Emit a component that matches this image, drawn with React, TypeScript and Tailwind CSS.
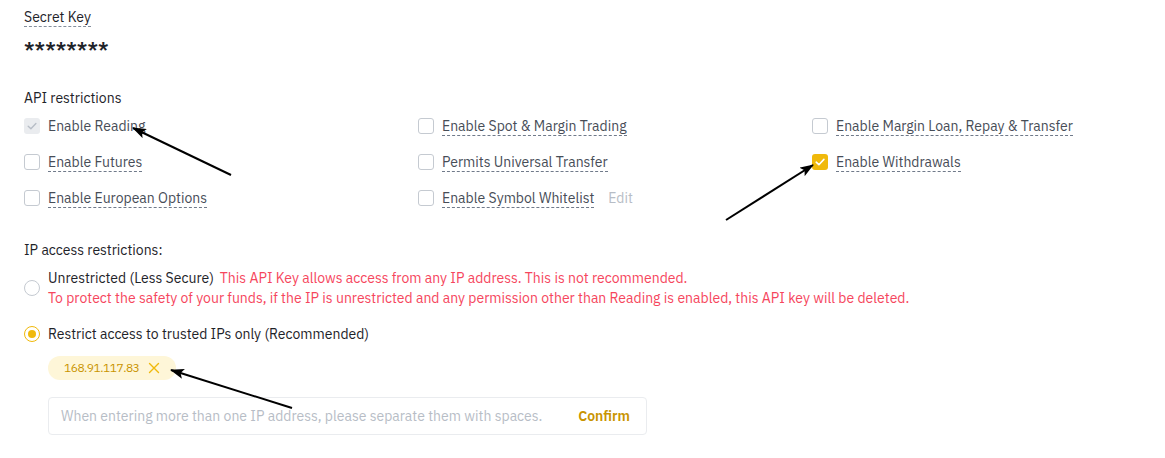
import React from "react";

const font = { fontFamily: '"IBM Plex Sans", "Noto Sans", "Liberation Sans", sans-serif' };

function Box({ state }: { state: "off" | "on" | "disabled" }) {
  if (state === "on")
    return (
      <span className="flex h-[16px] w-[16px] shrink-0 items-center justify-center rounded-[3px] bg-[#F0B90B]">
        <svg width="12" height="12" viewBox="0 0 12 12">
          <path d="M2.2 6.2 L4.9 8.7 L9.9 3.4" fill="none" stroke="#fff" strokeWidth="1.6" strokeLinecap="round" strokeLinejoin="round" />
        </svg>
      </span>
    );
  if (state === "disabled")
    return (
      <span className="flex h-[16px] w-[16px] shrink-0 items-center justify-center rounded-[3px] bg-[#EAECEF]">
        <svg width="12" height="12" viewBox="0 0 12 12">
          <path d="M2.2 6.2 L4.9 8.7 L9.9 3.4" fill="none" stroke="#B7BDC6" strokeWidth="1.4" strokeLinecap="round" strokeLinejoin="round" />
        </svg>
      </span>
    );
  return <span className="h-[16px] w-[16px] shrink-0 rounded-[3px] border border-[#C5CAD1] bg-white" />;
}

function Item({ label, state = "off", dashed = true, extra }: { label: string; state?: "off" | "on" | "disabled"; dashed?: boolean; extra?: React.ReactNode }) {
  return (
    <div className="flex h-[36px] items-center">
      <Box state={state} />
      <span
        className={
          "ml-[8px] text-[14px] leading-[18px] text-[#474D57] " +
          (dashed ? "border-b border-dashed border-[#707A8A]" : "border-b border-transparent")
        }
      >
        {label}
      </span>
      {extra}
    </div>
  );
}

export default function App() {
  return (
    <div className="relative h-[458px] w-[1165px] overflow-hidden bg-white text-[#1E2329]" style={font}>
      <div className="flex flex-col items-start pl-[24px] pt-[8px]">
        <span className="border-b border-dashed border-[#848E9C] text-[14px] leading-[18px] text-[#1E2329]">Secret Key</span>
        <div className="mt-[12px] text-[19px] font-semibold leading-[20px]">********</div>
        <div className="mt-[29px] text-[14px] leading-[20px]">API restrictions</div>
        <div className="grid grid-cols-[394px_394px_394px]">
          <Item label="Enable Reading" state="disabled" dashed={false} />
          <Item label="Enable Spot & Margin Trading" />
          <Item label="Enable Margin Loan, Repay & Transfer" />
          <Item label="Enable Futures" />
          <Item label="Permits Universal Transfer" />
          <Item label="Enable Withdrawals" state="on" />
          <Item label="Enable European Options" />
          <Item
            label="Enable Symbol Whitelist"
            extra={<span className="ml-[14px] text-[14px] leading-[18px] text-[#B7BDC6]">Edit</span>}
          />
        </div>
        <div className="mt-[24px] text-[14px] leading-[20px]">IP access restrictions:</div>
        <div className="mt-[8px] flex items-center">
          <span className="h-[16px] w-[16px] shrink-0 rounded-full border border-[#C5CAD1]" />
          <div className="ml-[8px] text-[14px] leading-[20px]">
            <div>
              <span className="text-[#1E2329]">Unrestricted (Less Secure)</span>
              <span className="ml-[6px] text-[#F6465D]">This API Key allows access from any IP address. This is not recommended.</span>
            </div>
            <div className="text-[#F6465D]">
              To protect the safety of your funds, if the IP is unrestricted and any permission other than Reading is enabled, this API key will be deleted.
            </div>
          </div>
        </div>
        <div className="mt-[16px] flex items-center">
          <span className="flex h-[16px] w-[16px] shrink-0 items-center justify-center rounded-full border border-[#F0B90B]">
            <span className="h-[8px] w-[8px] rounded-full bg-[#F0B90B]" />
          </span>
          <span className="ml-[8px] text-[14px] leading-[20px]">Restrict access to trusted IPs only (Recommended)</span>
        </div>
        <div className="ml-[24px] mt-[12px] flex h-[24px] items-center rounded-full bg-[#FEF6D8] pl-[16px] pr-[16px]">
          <span className="text-[12px] leading-[16px] tracking-[-0.5px] text-[#C99400]">168.91.117.83</span>
          <svg className="ml-[9px]" width="12" height="12" viewBox="0 0 12 12">
            <path d="M1.5 1.5 L10.5 10.5 M10.5 1.5 L1.5 10.5" stroke="#F0B90B" strokeWidth="1.4" strokeLinecap="round" />
          </svg>
        </div>
        <div className="ml-[24px] mt-[17px] flex h-[38px] w-[599px] items-center rounded-[4px] border border-[#EAECEF] pl-[12px] pr-[16px]">
          <span className="flex-1 text-[14px] text-[#B7BDC6]">When entering more than one IP address, please separate them with spaces.</span>
          <span className="text-[14px] font-semibold text-[#C99400]">Confirm</span>
        </div>
      </div>

      <svg className="pointer-events-none absolute left-0 top-0" width="1165" height="458">
        <defs>
          <marker id="ah" markerWidth="14" markerHeight="10" refX="13" refY="5" orient="auto" markerUnits="userSpaceOnUse">
            <path d="M0 0 L14 5 L0 10 L3 5 Z" fill="#000" />
          </marker>
        </defs>
        <line x1="231" y1="175" x2="133" y2="128" stroke="#000" strokeWidth="2" markerEnd="url(#ah)" />
        <line x1="726" y1="220" x2="813" y2="165" stroke="#000" strokeWidth="2" markerEnd="url(#ah)" />
        <line x1="292" y1="408" x2="171" y2="370" stroke="#000" strokeWidth="2" markerEnd="url(#ah)" />
      </svg>
    </div>
  );
}
